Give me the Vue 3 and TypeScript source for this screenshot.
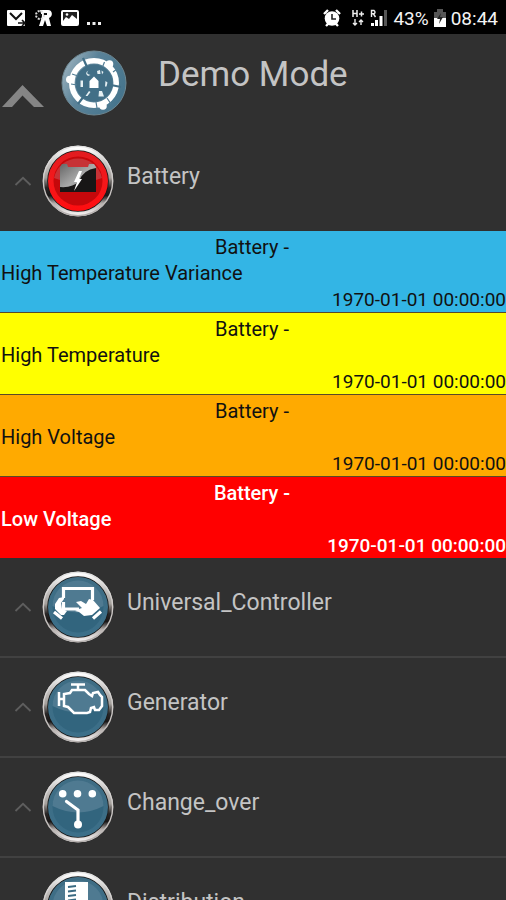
<script setup lang="ts">
type Kind = 'battery' | 'controller' | 'generator' | 'changeover' | 'distribution'

interface Alert {
  message: string
  level: string
}

interface Device {
  name: string
  kind: Kind
  alerts: Alert[]
}

const stamp = '1970-01-01 00:00:00'

const devices: Device[] = [
  {
    name: 'Battery',
    kind: 'battery',
    alerts: [
      { message: 'High Temperature Variance', level: 'info' },
      { message: 'High Temperature', level: 'warning' },
      { message: 'High Voltage', level: 'serious' },
      { message: 'Low Voltage', level: 'critical' },
    ],
  },
  { name: 'Universal_Controller', kind: 'controller', alerts: [] },
  { name: 'Generator', kind: 'generator', alerts: [] },
  { name: 'Change_over', kind: 'changeover', alerts: [] },
  { name: 'Distribution', kind: 'distribution', alerts: [] },
]
</script>

<template>
  <div class="screen">
    <svg class="defs" width="0" height="0" aria-hidden="true">
      <defs>
        <linearGradient id="metal" x1="0" y1="0" x2="0" y2="1">
          <stop offset="0" stop-color="#fff" />
          <stop offset="0.22" stop-color="#c9c7c5" />
          <stop offset="0.45" stop-color="#a5a09c" />
          <stop offset="0.6" stop-color="#2a2727" />
          <stop offset="0.72" stop-color="#191717" />
          <stop offset="0.84" stop-color="#b5afad" />
          <stop offset="1" stop-color="#f1eeee" />
        </linearGradient>
        <linearGradient id="rim" x1="0" y1="0" x2="0" y2="1">
          <stop offset="0" stop-color="#e2e2e2" />
          <stop offset="0.5" stop-color="#cfcbc9" />
          <stop offset="1" stop-color="#b5b0ae" />
        </linearGradient>
        <linearGradient id="blue" x1="0" y1="0" x2="0" y2="1">
          <stop offset="0" stop-color="#3f6d84" />
          <stop offset="1" stop-color="#3b6f89" />
        </linearGradient>
        <linearGradient id="red" x1="0" y1="0" x2="0" y2="1">
          <stop offset="0" stop-color="#e11c20" />
          <stop offset="0.5" stop-color="#f5181b" />
          <stop offset="1" stop-color="#ff0d10" />
        </linearGradient>
        <linearGradient id="steel" x1="0" y1="0" x2="1" y2="1">
          <stop offset="0" stop-color="#666" />
          <stop offset="0.5" stop-color="#aaa" />
          <stop offset="1" stop-color="#777" />
        </linearGradient>
        <linearGradient id="globe" x1="0" y1="0.2" x2="1" y2="0.7">
          <stop offset="0" stop-color="#9db3bf" />
          <stop offset="0.4" stop-color="#5a8298" />
          <stop offset="1" stop-color="#45748c" />
        </linearGradient>
      </defs>
    </svg>

    <div class="status">
      <div class="status-group">
        <svg width="20" height="18" viewBox="0 0 20 18" aria-hidden="true">
          <rect width="18" height="16" y="1" rx="1" fill="#fff" />
          <path d="M3 4l6 6 6-6" fill="none" stroke="#111" stroke-width="2" />
          <path d="M11 14h6M15 11l3 3-3 3" fill="none" stroke="#111" stroke-width="1.6" />
        </svg>
        <svg width="18" height="18" viewBox="0 0 18 18" aria-hidden="true">
          <path d="M5 1h8c5 0 5 7 1 8l2 8h-4l-2-6-2 6H4l3-9z" fill="#fff" />
          <circle cx="5" cy="6" r="4" fill="none" stroke="#ddd" stroke-width="2" stroke-dasharray="2 1.2" />
          <path d="M9 5h3M3 6h4" stroke="#111" stroke-width="2" />
        </svg>
        <svg width="18" height="18" viewBox="0 0 18 18" aria-hidden="true">
          <rect x="1" y="2" width="16" height="14" rx="1" fill="#222" stroke="#fff" stroke-width="2" />
          <path d="M2 12l3-4 3 2 3-4 5 4v5H2z" fill="#fff" />
          <circle cx="6" cy="5.5" r="1.3" fill="#fff" />
        </svg>
        <svg width="16" height="18" viewBox="0 0 16 18" aria-hidden="true">
          <path d="M0 13h3v3H0zM5.500 13h3v3h-3zM11 13h3v3h-3z" fill="#eee" />
        </svg>
      </div>
      <div class="status-group">
        <svg width="18" height="18" viewBox="0 0 18 18" aria-hidden="true">
          <path d="M1 5l4-4M17 5l-4-4M3 17l3-3M15 17l-3-3" stroke="#fff" stroke-width="2.4" />
          <circle cx="9" cy="9.5" r="7.3" fill="#fff" />
          <path d="M9 5v5h4" fill="none" stroke="#222" stroke-width="1.6" />
        </svg>
        <svg class="network" width="14" height="18" viewBox="0 0 14 18" aria-hidden="true">
          <path d="M2 1v7M6 1v7M2 4.5h4M8 5h5M10.500 2.500v5" stroke="#eee" stroke-width="1.5" />
          <path d="M4 10v6M10 11v5M2 14l2 2 2-2M8 13l2-2 2 2" fill="none" stroke="#eee" stroke-width="1.4" />
        </svg>
        <svg width="18" height="18" viewBox="0 0 18 18" aria-hidden="true">
          <path d="M1.500 8V1.500h2.500q2 1.700 0 3.300H1.500M3.500 5L5.500 8" fill="none" stroke="#eee" stroke-width="1.4" />
          <path d="M1 14h3v3H1zM5 11h3v6H5zM9.500 7h3v10h-3z" fill="#fff" />
          <path d="M14 1h3v16h-3z" fill="#555" />
        </svg>
        <span>43%</span>
        <svg width="12" height="18" viewBox="0 0 12 18" aria-hidden="true">
          <path d="M3 0h6v3h3v7H0V3h3z" fill="#555" />
          <path d="M0 9h12v9H0z" fill="#fff" />
          <path d="M7 4l-4 6h3l-1 5 4-7H6z" fill="#222" />
        </svg>
        <span>08:44</span>
      </div>
    </div>

    <header class="site">
      <button class="toggle-site" type="button" aria-label="Collapse Demo Mode">
        <svg width="42" height="22" viewBox="0 0 42 22" aria-hidden="true">
          <path d="M0 22L20.500 0 42 22H32L20.500 10.500 10 22z" fill="#858585" />
        </svg>
      </button>
      <svg class="site-icon" width="66" height="66" viewBox="0 0 66 66" aria-hidden="true">
        <circle cx="33" cy="33" r="32" fill="url(#globe)" stroke="#6d8792" />
        <circle cx="33" cy="33" r="18.5" fill="#426f87" />
        <circle cx="33" cy="33" r="22.2" fill="none" stroke="#fff" stroke-width="5.6" />
        <path d="M26 17l-4-9M50 35l10 2M23 46l-6 8" stroke="#426f87" stroke-width="2.2" />
        <path d="M41.500 17l2-5M52 22l4-3M16 35l-6-1M17 26l-6-2M35 52l1 6M46 48l4 6" stroke="#527d94" stroke-width="1.2" />
        <circle cx="48.5" cy="14" r="3.8" fill="#fff" />
        <circle cx="8.8" cy="29.5" r="3.8" fill="#fff" />
        <circle cx="42" cy="56" r="3.8" fill="#fff" />
        <path d="M28.500 31l4.500-4.500 4.500 4.500v7h-9z" fill="#fff" />
        <path d="M27.500 20.500q-3.500 3.500 2 4.500l-2.500 1q-4-3 .5-5.500M36 21l3-1 .5 4h-3zM40.500 20.500l2 1.500-1.500 2.500zM19.500 30.500h2.500v6.500h-2.500zM44.500 31l2 1.500-1 4h-1.500zM24.500 46l3.500-5 1.500 1-3 4zM38 41h3l2 5.500h-5.500z" fill="#e6f0f3" />
      </svg>
      <h1>Demo Mode</h1>
    </header>

    <main>
      <section v-for="device in devices" :key="device.name" class="device">
        <div class="row">
          <button class="toggle" type="button" :aria-label="'Collapse ' + device.name">
            <svg width="18" height="10" viewBox="0 0 18 10" aria-hidden="true">
              <path d="M1.500 9L9 1.800 16.500 9" fill="none" stroke="#5e5e5e" stroke-width="1.8" />
            </svg>
          </button>
          <svg width="72" height="72" viewBox="0 0 72 72" aria-hidden="true">
            <circle cx="36" cy="36" r="33" fill="#171717" stroke="url(#metal)" stroke-width="4.4" />
            <circle cx="36" cy="36" r="34.7" fill="none" stroke="url(#rim)" stroke-width="1.4" />
            <g v-if="device.kind === 'battery'">
              <circle cx="36" cy="36" r="30" fill="url(#red)" />
              <circle cx="36" cy="36" r="24.5" fill="#c5080b" />
              <path d="M12 33a24.500 24.500 0 0 1 48 0q-24 9-48 0" fill="#c73236" />
              <path d="M18 22l2-3h5l1 3h20l1-3h5l2 3v25H18z" fill="url(#steel)" />
              <path d="M18 42q13 1 19-6 4-11 17-13v24H18z" fill="#181616" />
              <path d="M37 26l-5 11h3l-3 9 8-12h-3l3-8z" fill="#fff" />
            </g>
            <g v-else>
              <circle cx="36" cy="36" r="30" fill="url(#blue)" />
              <circle cx="36" cy="36" r="25.5" fill="#32657e" />
              <path d="M10.500 35a25.500 25.500 0 0 1 51 0q-25 13-51 0" fill="#4f7a91" />
            </g>
            <g v-if="device.kind === 'controller'">
              <path d="M21.500 27v-9.500h29V29M21.500 31v7H37" fill="none" stroke="#fff" stroke-width="3.2" />
              <path d="M22 26l-5 1-4 6v5l6 6h3l3-4-5-2-1-6 3-4z" fill="#fff" />
              <path d="M34 31l5-1 5 3 3-5 4 1 7 8-8 7-8 1-5-4-4-1 4-2 3-1z" fill="#fff" />
              <path d="M12 41l8 6.500M51 47.500l8-7" stroke="#fff" stroke-width="3.2" />
            </g>
            <g v-else-if="device.kind === 'generator'" fill="none" stroke="#fff" stroke-width="2.5">
              <path d="M29 13.500h14M36 14v5M17 21v14M17 28h5" />
              <path d="M22 35V23l6-1 2-3h13l4 4 3 2 1-3 5-1 2 3 2 2v9l-3 4h-4l-1-3-3 1-1 4-3 1H32l-6-6z" />
            </g>
            <g v-else-if="device.kind === 'changeover'">
              <path d="M20.700 22.700h.01M35.500 22.700h.01M50.300 22.700h.01" stroke="#fff" stroke-width="7.6" stroke-linecap="round" />
              <path d="M24.500 30.500L36 39v15" fill="none" stroke="#fff" stroke-width="3.2" stroke-linecap="round" />
              <circle cx="36" cy="53.5" r="4" fill="#fff" />
            </g>
            <g v-else-if="device.kind === 'distribution'">
              <path d="M23 11h23v46H23z" fill="#fff" />
              <path d="M26 16l8-1M26 20.500l8-1M26 25l8-1M26 29.500l8-1" stroke="#3a6a82" stroke-width="1.8" />
            </g>
          </svg>
          <h2>{{ device.name }}</h2>
        </div>
        <ul v-if="device.alerts.length" class="alerts">
          <li v-for="alert in device.alerts" :key="alert.message" :class="alert.level">
            <p class="source">{{ device.name }} -</p>
            <p class="message">{{ alert.message }}</p>
            <time>{{ stamp }}</time>
          </li>
        </ul>
      </section>
    </main>
  </div>
</template>

<style>
body {
  margin: 0;
  background: #303030;
}
</style>

<style scoped>
.screen {
  height: 100vh;
  overflow: hidden;
  background: #303030;
  color: #c4c4c4;
  font-family: Roboto, "Liberation Sans", sans-serif;
}

.defs {
  position: absolute;
}

svg {
  display: block;
  flex: none;
}

.status {
  display: flex;
  align-items: center;
  justify-content: space-between;
  height: 34px;
  padding: 2px 8px 0 7px;
  box-sizing: border-box;
  background: #000;
  color: #f4f4f4;
  font-size: 19px;
}

.status-group {
  display: flex;
  align-items: center;
  gap: 8px;
}

.status-group + .status-group {
  gap: 5px;
}

.status-group .network {
  margin-left: 5px;
}

.site {
  display: flex;
  align-items: flex-start;
  height: 97px;
}

button {
  flex: none;
  padding: 0;
  border: 0;
  background: none;
  cursor: pointer;
}

.toggle-site {
  margin: 51px 0 0 2px;
}

.site-icon {
  margin: 16px 0 0 17px;
}

h1,
h2 {
  margin: 0;
  font-weight: 400;
}

h1 {
  margin: 20px 0 0 31px;
  font-size: 35px;
  line-height: 42px;
}

.row {
  display: flex;
  align-items: center;
  height: 100px;
  box-sizing: border-box;
}

.device + .device .row {
  border-bottom: 2px solid #414141;
}

.toggle {
  display: flex;
  justify-content: flex-end;
  width: 32px;
  margin-right: 10px;
}

h2 {
  padding-bottom: 8px;
  margin-left: 13px;
  font-size: 23px;
  line-height: 28px;
}

.alerts {
  margin: 0;
  padding: 0;
  list-style: none;
  color: #111;
}

.alerts li {
  border-bottom: 1px solid #5a4a28;
}

.alerts li:last-child {
  border-bottom: 0;
}

.alerts p {
  margin: 0;
  font-size: 20px;
}

.alerts .source {
  padding: 4px 2px 0 0;
  line-height: 24px;
  text-align: center;
}

.alerts .message {
  padding-left: 1px;
  line-height: 28px;
}

.alerts time {
  display: block;
  padding-top: 1px;
  font-size: 19px;
  line-height: 24px;
  text-align: right;
}

.info {
  background: #33b5e5;
}

.warning {
  background: #ff0;
}

.serious {
  background: #fa0;
}

.critical {
  background: #f00;
  color: #fff;
  font-weight: 500;
}
</style>
